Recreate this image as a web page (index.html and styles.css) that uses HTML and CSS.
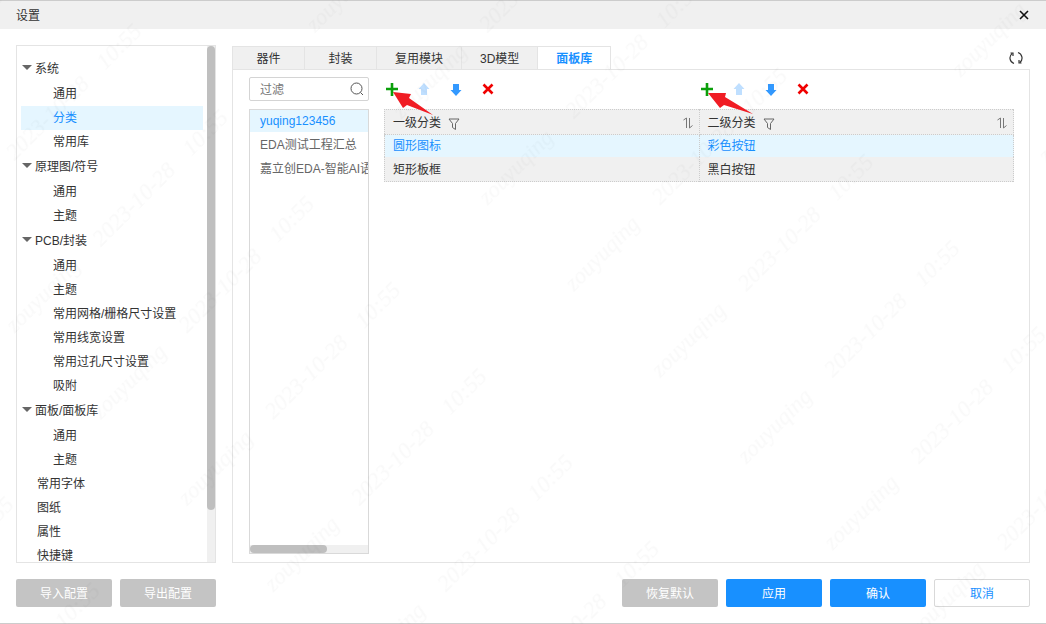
FILE: index.html
```html
<!DOCTYPE html>
<html lang="zh-CN">
<head>
<meta charset="utf-8">
<title>设置</title>
<link rel="stylesheet" href="styles.css">
</head>
<body>
<svg class="sprite" aria-hidden="true">
  <symbol id="plus" viewBox="0 0 16 16"><path d="M8 2v13M2 8h12" stroke="#0a9f0a" stroke-width="2.600" fill="none"/></symbol>
  <symbol id="up" viewBox="0 0 16 16"><path d="M8 2l5.500 6h-2.500v6H5V8H2.500z" fill="currentColor"/></symbol>
  <symbol id="down" viewBox="0 0 16 16"><path d="M8 15L2.500 9h2.500V3h6v6h2.500z" fill="currentColor"/></symbol>
  <symbol id="remove" viewBox="0 0 16 16"><path d="M3.500 3.500l9 9M12.500 3.500l-9 9" stroke="#f00000" stroke-width="2.600" fill="none"/></symbol>
  <symbol id="filter" viewBox="0 0 12 12"><path d="M1 1h10L7.500 5.500v6L4.500 9.500v-4z" stroke="#666" fill="none"/></symbol>
  <symbol id="sort" viewBox="0 0 12 12"><path d="M1.500 3L4.500 1v10M7.500 1v10l3-2.500" stroke="#777" fill="none"/></symbol>
</svg>
<div class="dialog">
  <header class="titlebar">
    <h1 class="title">设置</h1>
    <button class="icon-btn" aria-label="关闭"><svg width="12" height="12" viewBox="0 0 12 12"><path d="M2 2l8 8M10 2l-8 8" stroke="#111" stroke-width="1.600"/></svg></button>
  </header>
  <main class="content">
    <nav class="tree" aria-label="设置分类">
      <div class="tree-list">
        <button class="group">系统</button>
        <a class="node" href="#">通用</a>
        <a class="node selected" href="#">分类</a>
        <a class="node" href="#">常用库</a>
        <button class="group">原理图/符号</button>
        <a class="node" href="#">通用</a>
        <a class="node" href="#">主题</a>
        <button class="group">PCB/封装</button>
        <a class="node" href="#">通用</a>
        <a class="node" href="#">主题</a>
        <a class="node" href="#">常用网格/栅格尺寸设置</a>
        <a class="node" href="#">常用线宽设置</a>
        <a class="node" href="#">常用过孔尺寸设置</a>
        <a class="node" href="#">吸附</a>
        <button class="group">面板/面板库</button>
        <a class="node" href="#">通用</a>
        <a class="node" href="#">主题</a>
        <a class="node top" href="#">常用字体</a>
        <a class="node top" href="#">图纸</a>
        <a class="node top" href="#">属性</a>
        <a class="node top" href="#">快捷键</a>
      </div>
      <div class="vbar"><div class="vthumb"></div></div>
    </nav>
    <section class="workspace">
      <div class="tab-row">
        <div class="tabs" role="tablist">
          <button class="tab" role="tab">器件</button>
          <button class="tab" role="tab">封装</button>
          <button class="tab" role="tab">复用模块</button>
          <button class="tab" role="tab">3D模型</button>
          <button class="tab active" role="tab" aria-selected="true">面板库</button>
        </div>
        <button class="icon-btn refresh" aria-label="刷新"><svg width="14" height="14" viewBox="0 0 14 14" fill="none" stroke="#333" stroke-width="1.200"><path d="M5 12.500A5.800 5.800 0 0 1 3 2.600M1.500 2H4v3M9 1.500a5.800 5.800 0 0 1 2 9.900M12.500 12H10V9"/></svg></button>
      </div>
      <div class="panel">
        <div class="owners">
          <label class="search">
            <input class="search-input" type="text" placeholder="过滤" aria-label="过滤">
            <svg width="14" height="14" viewBox="0 0 14 14" fill="none" stroke="#555"><circle cx="6.500" cy="6.500" r="5.500"/><path d="M10.500 10.500L13 13"/></svg>
          </label>
          <div class="owner-box">
            <ul class="owner-list">
              <li class="owner selected">yuqing123456</li>
              <li class="owner">EDA测试工程汇总</li>
              <li class="owner">嘉立创EDA-智能AI语</li>
            </ul>
            <div class="hbar"><div class="hthumb"></div></div>
          </div>
        </div>
        <div class="categories">
          <div class="toolbars">
            <div class="toolbar">
              <button class="tool" aria-label="添加一级分类"><svg width="16" height="16"><use href="#plus"/></svg><svg class="pointer" width="46" height="24" aria-hidden="true"><path d="M0 0l18 2-2 4 24 17-26-10-4 3z" fill="#f01c24"/></svg></button>
              <button class="tool faded" aria-label="上移"><svg width="16" height="16"><use href="#up"/></svg></button>
              <button class="tool blue" aria-label="下移"><svg width="16" height="16"><use href="#down"/></svg></button>
              <button class="tool" aria-label="删除"><svg width="16" height="16"><use href="#remove"/></svg></button>
            </div>
            <div class="toolbar">
              <button class="tool" aria-label="添加二级分类"><svg width="16" height="16"><use href="#plus"/></svg><svg class="pointer" width="46" height="24" aria-hidden="true"><path d="M0 1l18 0-1 4 28 17-29-9-4 3z" fill="#f01c24"/></svg></button>
              <button class="tool faded" aria-label="上移"><svg width="16" height="16"><use href="#up"/></svg></button>
              <button class="tool blue" aria-label="下移"><svg width="16" height="16"><use href="#down"/></svg></button>
              <button class="tool" aria-label="删除"><svg width="16" height="16"><use href="#remove"/></svg></button>
            </div>
          </div>
          <table class="table">
            <thead>
              <tr>
                <th><div class="head">一级分类<svg width="12" height="12"><use href="#filter"/></svg><svg class="sort" width="12" height="12"><use href="#sort"/></svg></div></th>
                <th><div class="head">二级分类<svg width="12" height="12"><use href="#filter"/></svg><svg class="sort" width="12" height="12"><use href="#sort"/></svg></div></th>
              </tr>
            </thead>
            <tbody>
              <tr class="current"><td>圆形图标</td><td>彩色按钮</td></tr>
              <tr><td>矩形板框</td><td>黑白按钮</td></tr>
            </tbody>
          </table>
        </div>
      </div>
    </section>
  </main>
  <footer class="actions">
    <button class="btn muted">导入配置</button>
    <button class="btn muted">导出配置</button>
    <button class="btn muted push">恢复默认</button>
    <button class="btn primary">应用</button>
    <button class="btn primary">确认</button>
    <button class="btn plain">取消</button>
  </footer>
</div>
<svg class="watermark" aria-hidden="true">
  <defs>
    <pattern id="stamp" x="-10" y="-60" width="425" height="122" patternUnits="userSpaceOnUse" patternTransform="translate(574 292) rotate(-45)">
      <text x="10" y="60">zouyuqing</text>
      <text x="132" y="60">2023-10-28</text>
      <text x="260" y="60">10:55</text>
    </pattern>
  </defs>
  <rect width="100%" height="100%" fill="url(#stamp)"/>
</svg>
</body>
</html>
```

FILE: styles.css
```css
* { box-sizing: border-box; }
body {
  margin: 0;
  background: #fff;
  color: #333;
  font: 12px/24px "Liberation Sans", "Noto Sans CJK SC", sans-serif;
}
button, input { font: inherit; color: inherit; }
button { border: 0; padding: 0; background: none; cursor: pointer; }
svg { display: block; flex: none; }
.sprite { position: absolute; width: 0; height: 0; }

.dialog {
  display: flex;
  flex-direction: column;
  height: 100vh;
  border-top: 1px solid #ccc;
  border-bottom: 1px solid #ccc;
}
.titlebar {
  display: flex;
  align-items: center;
  justify-content: space-between;
  height: 28px;
  padding: 0 16px;
  background: #f0f0f0;
}
.title { margin: 0; padding-top: 2px; font-size: 12px; font-weight: 400; }
.content {
  flex: 1;
  min-height: 0;
  display: flex;
  gap: 16px;
  padding: 16px 16px 0;
}

.tree {
  display: flex;
  width: 200px;
  border: 1px solid #e4e4e4;
  overflow: hidden;
}
.tree-list {
  flex: 1;
  display: flex;
  flex-direction: column;
  padding: 10px 4px 0;
}
.group {
  flex: none;
  display: flex;
  align-items: center;
  gap: 3px;
  height: 26px;
  padding-left: 1px;
  text-align: left;
}
.group::before {
  content: "";
  margin-bottom: 4px;
  border: 5px solid transparent;
  border-top-color: #666;
  border-bottom-width: 0;
}
.node {
  flex: none;
  height: 24px;
  padding-left: 32px;
  color: inherit;
  text-decoration: none;
}
.node.top { padding-left: 16px; }
.selected { background: #e5f6ff; color: #1890ff; }
.node.selected { color: #1890ff; }
.vbar { width: 8px; background: #f0f0f0; }
.vthumb { height: 90%; border-radius: 4px; background: #bfbfbf; }

.workspace {
  flex: 1;
  min-width: 0;
  display: flex;
  flex-direction: column;
  padding-top: 1px;
}
.tab-row { display: flex; justify-content: space-between; }
.tabs { display: flex; margin-bottom: -1px; border-left: 1px solid #e4e4e4; }
.tab {
  height: 24px;
  min-width: 72px;
  padding: 0 18px;
  border: solid #e4e4e4;
  border-width: 1px 1px 1px 0;
  background: #f0f0f0;
}
.tab.active {
  border-bottom-color: #fff;
  background: #fff;
  color: #1890ff;
  font-weight: 700;
}
.refresh { padding-right: 7px; }
.panel {
  flex: 1;
  min-height: 0;
  display: flex;
  gap: 15px;
  padding: 7px 15px 8px 16px;
  border: 1px solid #e4e4e4;
}
.owners { width: 120px; display: flex; flex-direction: column; gap: 8px; }
.search {
  display: flex;
  align-items: center;
  height: 24px;
  padding: 0 4px 0 10px;
  border: 1px solid #d4d4d4;
  border-radius: 2px;
}
.search-input { flex: 1; min-width: 0; padding: 2px 0 0; border: 0; outline: 0; background: none; }
.search-input::placeholder { color: #777; opacity: 1; }
.owner-box {
  flex: 1;
  display: flex;
  flex-direction: column;
  justify-content: space-between;
  overflow: hidden;
  border: 1px solid #d9d9d9;
}
.owner-list {
  display: flex;
  flex-direction: column;
  gap: 2px;
  margin: 0;
  padding: 0;
  list-style: none;
  color: #666;
}
.owner { padding-left: 10px; line-height: 22px; white-space: nowrap; }
.owner.selected { color: #1890ff; }
.hbar { height: 8px; background: #f0f0f0; }
.hthumb { width: 65%; height: 8px; border-radius: 4px; background: #bfbfbf; }

.categories { flex: 1; min-width: 0; display: flex; flex-direction: column; gap: 8px; }
.toolbars { display: grid; grid-template-columns: 1fr 1fr; }
.toolbar { display: flex; align-items: center; gap: 16px; height: 24px; }
.tool { position: relative; }
.faded { color: #bfdfff; }
.blue { color: #3399ff; }
.pointer { position: absolute; left: 9px; top: 11px; z-index: 1; }
.table {
  width: 100%;
  table-layout: fixed;
  border-collapse: collapse;
  border: 1px dotted #ccc;
  background: #f0f0f0;
}
.table th, .table td {
  height: 24px;
  padding: 0 8px;
  border-right: 1px dotted #ccc;
  font-weight: 400;
  text-align: left;
  line-height: 22px;
}
.table td { padding-top: 2px; }
.table th { padding: 2px 5px 0 8px; border-bottom: 1px dotted #ccc; }
.head { display: flex; align-items: center; gap: 7px; }
.head svg { margin-top: 2px; }
.head .sort { margin: 0 0 0 auto; }
.current { background: #e5f6ff; color: #1890ff; }
.table .current td { height: 22px; padding-top: 0; }

.actions { display: flex; gap: 8px; padding: 16px; }
.btn { width: 96px; height: 28px; padding-top: 2px; border-radius: 2px; color: #fff; }
.muted { background: #c4c4c4; }
.primary { background: #1890ff; }
.plain { border: 1px solid #d9d9d9; background: #fff; color: #1890ff; }
.push { margin-left: auto; }

.watermark {
  position: fixed;
  inset: 0;
  width: 100%;
  height: 100%;
  pointer-events: none;
  fill: rgba(0, 0, 0, 0.022);
  font: italic 23px "Liberation Serif", serif;
}
```
